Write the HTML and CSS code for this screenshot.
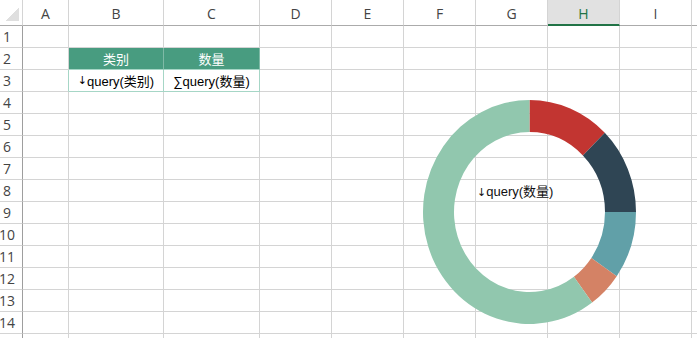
FILE: index.html
```html
<!DOCTYPE html>
<html lang="zh">
<head>
  <meta charset="UTF-8" />
  <meta name="viewport" content="width=device-width, initial-scale=1.0" />
  <title>Sheet</title>
  <link rel="stylesheet" href="styles.css">
</head>
<body>
  <div class="sheet">
    <div class="row head">
      <div class="corner"><span class="tri"></span></div>
      <div>A</div><div>B</div><div>C</div><div>D</div><div>E</div>
      <div>F</div><div>G</div><div class="selected">H</div><div>I</div><div></div>
    </div>
    <div class="row"><div class="rh">1</div><div></div><div></div><div></div><div></div><div></div><div></div><div></div><div></div><div></div><div></div></div>
    <div class="row"><div class="rh">2</div><div></div><div class="th">类别</div><div class="th">数量</div><div></div><div></div><div></div><div></div><div></div><div></div><div></div></div>
    <div class="row"><div class="rh">3</div><div class="edge"></div><div class="td"><span class="arrow">↓</span>query(类别)</div><div class="td">∑query(数量)</div><div></div><div></div><div></div><div></div><div></div><div></div><div></div></div>
    <div class="row"><div class="rh">4</div><div></div><div></div><div></div><div></div><div></div><div></div><div></div><div></div><div></div><div></div></div>
    <div class="row"><div class="rh">5</div><div></div><div></div><div></div><div></div><div></div><div></div><div></div><div></div><div></div><div></div></div>
    <div class="row"><div class="rh">6</div><div></div><div></div><div></div><div></div><div></div><div></div><div></div><div></div><div></div><div></div></div>
    <div class="row"><div class="rh">7</div><div></div><div></div><div></div><div></div><div></div><div></div><div></div><div></div><div></div><div></div></div>
    <div class="row"><div class="rh">8</div><div></div><div></div><div></div><div></div><div></div><div></div><div></div><div></div><div></div><div></div></div>
    <div class="row"><div class="rh">9</div><div></div><div></div><div></div><div></div><div></div><div></div><div></div><div></div><div></div><div></div></div>
    <div class="row"><div class="rh">10</div><div></div><div></div><div></div><div></div><div></div><div></div><div></div><div></div><div></div><div></div></div>
    <div class="row"><div class="rh">11</div><div></div><div></div><div></div><div></div><div></div><div></div><div></div><div></div><div></div><div></div></div>
    <div class="row"><div class="rh">12</div><div></div><div></div><div></div><div></div><div></div><div></div><div></div><div></div><div></div><div></div></div>
    <div class="row"><div class="rh">13</div><div></div><div></div><div></div><div></div><div></div><div></div><div></div><div></div><div></div><div></div></div>
    <div class="row"><div class="rh">14</div><div></div><div></div><div></div><div></div><div></div><div></div><div></div><div></div><div></div><div></div></div>
    <div class="row"><div class="rh"></div><div></div><div></div><div></div><div></div><div></div><div></div><div></div><div></div><div></div><div></div></div>

    <!-- floating chart object -->
    <div class="chart">
      <svg width="213" height="224" viewBox="0 0 213 224">
        <path fill="#c23531" d="M106.5 0 A106.5 112 0 0 1 181.81 32.8 L159.89 55.43 A75.5 80 0 0 0 106.5 32 Z"/>
        <path fill="#2f4554" d="M181.81 32.8 A106.5 112 0 0 1 213 112 L182 112 A75.5 80 0 0 0 159.89 55.43 Z"/>
        <path fill="#61a0a8" d="M213 112 A106.5 112 0 0 1 193.74 176.24 L168.35 157.89 A75.5 80 0 0 0 182 112 Z"/>
        <path fill="#d48265" d="M193.74 176.24 A106.5 112 0 0 1 169.1 202.61 L150.88 176.72 A75.5 80 0 0 0 168.35 157.89 Z"/>
        <path fill="#91c7ae" d="M169.1 202.61 A106.5 112 0 1 1 106.5 0 L106.5 32 A75.5 80 0 1 0 150.88 176.72 Z"/>
      </svg>
      <div class="chart-label"><span class="arrow">↓</span>query(数量)</div>
    </div>
  </div>
</body>
</html>
```

FILE: styles.css
```css
body {
  margin: 0;
  background: #fff;
  overflow: hidden;
  font-family: "Liberation Sans", "Noto Sans CJK SC", sans-serif;
}
.sheet {
  position: relative;
  width: 697px;
  height: 338px;
  overflow: hidden;
}
.row {
  display: grid;
  grid-template-columns: 23px 46px 95px 96px 72px 72px 72px 72px 72px 72px 72px;
  height: 22px;
}
.row > div {
  box-sizing: border-box;
  border-right: 1px solid #d4d4d4;
  border-bottom: 1px solid #d4d4d4;
}
.row.head {
  height: 26px;
}
.row.head > div {
  display: flex;
  align-items: center;
  justify-content: center;
  padding-top: 2px;
  border-bottom-color: #ababab;
  color: #444;
  font-family: "Open Sans", "Noto Sans", sans-serif;
  font-size: 14px;
}
.row.head > .corner {
  position: relative;
  border-right-color: #d4d4d4;
}
.tri {
  position: absolute;
  left: 5px;
  top: 8px;
  width: 14px;
  height: 13px;
  background: linear-gradient(to bottom right, transparent 50%, #dfdfdf 50%);
}
.row.head > .selected {
  background: #e1e1e1;
  color: #217346;
  border-bottom: 2px solid #217346;
}
.row > .rh {
  display: flex;
  align-items: center;
  justify-content: center;
  padding-right: 8px;
  border-right-color: #9e9e9e;
  color: #444;
  font-family: "Open Sans", "Noto Sans", sans-serif;
  font-size: 14px;
}
.row > .th,
.row > .td {
  display: flex;
  align-items: center;
  justify-content: center;
  font-size: 13px;
}
.row > .th {
  background: #489c80;
  color: #fff;
  border-right-color: #7fbaa6;
  border-bottom-color: #a6d6c6;
}
.row > .td {
  color: #000;
  border-right-color: #a6d6c6;
  border-bottom-color: #a6d6c6;
}
.row > .edge {
  border-right-color: #a6d6c6;
}
.arrow {
  font-family: "DejaVu Sans", sans-serif;
  font-size: 11px;
}
.chart {
  position: absolute;
  left: 423px;
  top: 100px;
  width: 213px;
  height: 224px;
}
.chart svg {
  display: block;
}
.chart-label {
  position: absolute;
  left: 54px;
  top: 81px;
  font-size: 13px;
  color: #111;
  white-space: nowrap;
}
```
